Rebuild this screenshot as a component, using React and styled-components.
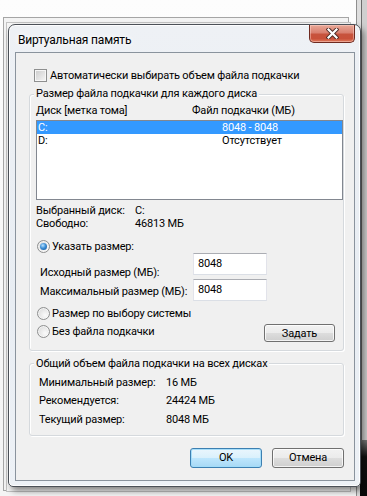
import React from "react";
import styled, { createGlobalStyle } from "styled-components";

const Global = createGlobalStyle`
  html, body { margin: 0; padding: 0; background: #fff; }
  body {
    font-family: "Segoe UI", Roboto, "Noto Sans", sans-serif;
    font-size: 11px;
    letter-spacing: -0.17px;
    color: #000;
  }
  * { white-space: nowrap; }
`;

const Desktop = styled.div`
  position: relative;
  width: 367px;
  height: 496px;
  overflow: hidden;
  background: linear-gradient(#fdfdfd, #f4f4f4);
`;

const BackWindow = styled.div`
  position: absolute;
  left: 3px;
  top: 17px;
  width: 346px;
  height: 474px;
  box-sizing: border-box;
  border: 1px solid #a5a5a5;
  background: #f3f3f3;
`;

const BackPanel = styled.div`
  position: absolute;
  left: 6px;
  top: 22px;
  width: 345px;
  height: 470px;
  box-sizing: border-box;
  border: 1px solid #c3c3c3;
  background: #f6f6f6;
`;

const RightStrip = styled.div`
  position: absolute;
  left: 356px;
  top: 0;
  width: 11px;
  height: 496px;
  box-sizing: border-box;
  border-left: 1px solid #8f8f8f;
  background: linear-gradient(90deg, #dedede 0 4px, #6b6b6b 4px 5px, #cfcfcf 5px);
`;

const RightShade = styled.div`
  position: absolute;
  left: 360px;
  top: 440px;
  width: 7px;
  height: 56px;
  background: linear-gradient(#7a7a7a, #111 30%, #0a0a0a);
`;

const Dialog = styled.div`
  position: absolute;
  left: 8px;
  top: 24px;
  width: 353px;
  height: 463px;
  box-sizing: border-box;
  display: flex;
  flex-direction: column;
  border: 1px solid #4b5057;
  border-radius: 7px 7px 5px 5px;
  background: linear-gradient(#eef1f5, #e8edf3 60%, #edf1f6);
  box-shadow: inset 0 0 0 1px rgba(255, 255, 255, 0.85),
    3px 4px 6px rgba(0, 0, 0, 0.45);
`;

const TitleBar = styled.div`
  flex: none;
  display: flex;
  justify-content: space-between;
  align-items: flex-start;
  height: 27px;
  padding: 0 5px 0 9px;
`;

const Title = styled.div`
  margin-top: 8px;
  line-height: 15px;
  font-size: 12px;
  text-shadow: 0 0 6px #fff, 0 0 10px #fff;
`;

const CloseButton = styled.div`
  width: 46px;
  height: 18px;
  box-sizing: border-box;
  display: flex;
  align-items: center;
  justify-content: center;
  border: 1px solid #6e2a20;
  border-top: none;
  border-radius: 0 0 5px 5px;
  background: linear-gradient(#e9a897 0%, #d98070 45%, #c7533d 55%, #c9513a 80%, #e07c5e 100%);
  box-shadow: inset 0 0 0 1px rgba(255, 220, 210, 0.45);
`;

const Client = styled.div`
  flex: 1;
  min-height: 0;
  margin: 0 5px 5px 6px;
  border: 1px solid #8a939d;
  background: #f0f0f0;
  padding: 15px 10px 0 13px;
  display: flex;
  flex-direction: column;
`;

const CheckRow = styled.label`
  flex: none;
  display: flex;
  align-items: center;
  gap: 3px;
  height: 15px;
  margin-left: 5px;
`;

const CheckBox = styled.span`
  width: 13px;
  height: 13px;
  box-sizing: border-box;
  flex: none;
  border: 1px solid #8e8f8f;
  background: linear-gradient(135deg, #cbcbcb, #f6f6f6);
  box-shadow: inset 0 0 0 1px #f6f6f6;
`;

const Group = styled.section`
  flex: none;
  margin-top: ${(p) => p.$mt}px;
  padding: ${(p) => p.$pad};
  border: 1px solid #d5d9dd;
  border-radius: 3px;
  box-shadow: inset 1px 1px 0 #fff, 1px 1px 0 #fff;
`;

const GroupTitle = styled.div`
  width: fit-content;
  margin: ${(p) => p.$mt}px 0 0 ${(p) => p.$ml}px;
  padding: 0 2px;
  line-height: 15px;
  background: #f0f0f0;
`;

const HeaderRow = styled.div`
  display: grid;
  grid-template-columns: 156px 1fr;
  margin-top: 2px;
  line-height: 15px;
`;

const ListBox = styled.div`
  margin-top: 2px;
  height: 80px;
  box-sizing: border-box;
  border: 1px solid #828790;
  background: #fff;
`;

const ListRow = styled.div`
  display: grid;
  grid-template-columns: 184px 1fr;
  height: 13px;
  line-height: 13px;
  padding-left: 1px;
  background: ${(p) => (p.$selected ? "#3399ff" : "transparent")};
  color: ${(p) => (p.$selected ? "#fff" : "#000")};
`;

const InfoGrid = styled.div`
  margin-top: ${(p) => p.$mt}px;
  display: grid;
  grid-template-columns: ${(p) => p.$col}px 1fr;
  grid-auto-rows: ${(p) => p.$row}px;
  line-height: ${(p) => p.$row}px;
`;

const RadioRow = styled.label`
  display: flex;
  align-items: center;
  gap: 2px;
  height: 13px;
  margin-top: ${(p) => p.$mt || 0}px;
  margin-left: 1px;
  line-height: 13px;
`;

const Radio = styled.span`
  position: relative;
  width: 13px;
  height: 13px;
  box-sizing: border-box;
  flex: none;
  border-radius: 50%;
  border: 1px solid #8e8f8f;
  background: radial-gradient(circle at 65% 65%, #fbfbfb 0%, #e4e4e4 60%, #d2d2d2 100%);
  box-shadow: inset 0 0 0 1px rgba(255, 255, 255, 0.6);

  &::after {
    content: "";
    display: ${(p) => (p.$checked ? "block" : "none")};
    position: absolute;
    left: 2px;
    top: 2px;
    width: 7px;
    height: 7px;
    border-radius: 50%;
    background: radial-gradient(circle at 40% 35%, #b9e2ff 0%, #3d8fd6 45%, #0d4c92 100%);
  }
`;

const FieldRow = styled.div`
  display: grid;
  grid-template-columns: 157px 74px;
  margin-top: ${(p) => p.$mt}px;
`;

const FieldLabel = styled.div`
  height: 22px;
  box-sizing: border-box;
  padding: ${(p) => p.$drop}px 0 0 4px;
  line-height: 15px;
`;

const TextBox = styled.div`
  height: 22px;
  box-sizing: border-box;
  border: 1px solid #dbdfe6;
  border-top-color: #abadb3;
  border-left-color: #e2e3ea;
  border-right-color: #e2e3ea;
  background: #fff;
  padding-left: 4px;
  line-height: 19px;
`;

const LastRow = styled.div`
  display: flex;
  justify-content: space-between;
  align-items: flex-start;
  margin-top: 4px;
  padding-right: 8px;
`;

const LastRadio = styled(RadioRow)`
  margin-top: 1px;
`;

const Button = styled.div`
  width: ${(p) => p.$w}px;
  height: ${(p) => p.$h}px;
  box-sizing: border-box;
  display: flex;
  align-items: center;
  justify-content: center;
  border: 1px solid ${(p) => (p.$default ? "#3c7fb1" : "#707070")};
  border-radius: 3px;
  background: ${(p) =>
    p.$default
      ? "linear-gradient(#eaf6fd 0%, #d9f0fc 50%, #bee6fd 50%, #a7d9f5 100%)"
      : "linear-gradient(#f2f2f2 0%, #ebebeb 50%, #dddddd 50%, #cfcfcf 100%)"};
  box-shadow: inset 0 0 0 1px
    ${(p) => (p.$default ? "rgba(160, 220, 250, 0.9)" : "rgba(255, 255, 255, 0.75)")};
  line-height: 15px;
`;

const ButtonBar = styled.div`
  flex: none;
  display: flex;
  justify-content: flex-end;
  gap: 10px;
  margin-top: 12px;
`;

export default function App() {
  return (
    <>
      <Global />
      <Desktop>
        <BackWindow />
        <BackPanel />
        <RightStrip />
        <RightShade />
        <Dialog>
          <TitleBar>
            <Title>Виртуальная память</Title>
            <CloseButton>
              <svg width="13" height="11" viewBox="0 0 13 11">
                <path d="M2.5 1.5 L10.5 9.5 M10.5 1.5 L2.5 9.5" stroke="#4a2a24" strokeWidth="4" strokeLinecap="square" fill="none" />
                <path d="M2.5 1.5 L10.5 9.5 M10.5 1.5 L2.5 9.5" stroke="#fff" strokeWidth="2.2" strokeLinecap="square" fill="none" />
              </svg>
            </CloseButton>
          </TitleBar>
          <Client>
            <CheckRow>
              <CheckBox />
              <span>Автоматически выбирать объем файла подкачки</span>
            </CheckRow>

            <Group $mt={11} $pad="0 0 8px 6px">
              <GroupTitle $mt={-9} $ml={-2}>Размер файла подкачки для каждого диска</GroupTitle>
              <HeaderRow>
                <span>Диск [метка тома]</span>
                <span>Файл подкачки (МБ)</span>
              </HeaderRow>
              <ListBox>
                <ListRow $selected>
                  <span>C:</span>
                  <span>8048 - 8048</span>
                </ListRow>
                <ListRow>
                  <span>D:</span>
                  <span>Отсутствует</span>
                </ListRow>
              </ListBox>
              <InfoGrid $mt={4} $col={99} $row={13}>
                <span>Выбранный диск:</span>
                <span>C:</span>
                <span>Свободно:</span>
                <span>46813 МБ</span>
              </InfoGrid>
              <RadioRow $mt={10}>
                <Radio $checked />
                <span>Указать размер:</span>
              </RadioRow>
              <FieldRow $mt={0}>
                <FieldLabel $drop={12}>Исходный размер (МБ):</FieldLabel>
                <TextBox>8048</TextBox>
              </FieldRow>
              <FieldRow $mt={4}>
                <FieldLabel $drop={5}>Максимальный размер (МБ):</FieldLabel>
                <TextBox>8048</TextBox>
              </FieldRow>
              <RadioRow $mt={6}>
                <Radio />
                <span>Размер по выбору системы</span>
              </RadioRow>
              <LastRow>
                <LastRadio>
                  <Radio />
                  <span>Без файла подкачки</span>
                </LastRadio>
                <Button $w={71} $h={18}>Задать</Button>
              </LastRow>
            </Group>

            <Group $mt={12} $pad="0 0 6px 9px">
              <GroupTitle $mt={-8} $ml={-5}>Общий объем файла подкачки на всех дисках</GroupTitle>
              <InfoGrid $mt={3} $col={127} $row={18.3}>
                <span>Минимальный размер:</span>
                <span>16 МБ</span>
                <span>Рекомендуется:</span>
                <span>24424 МБ</span>
                <span>Текущий размер:</span>
                <span>8048 МБ</span>
              </InfoGrid>
            </Group>

            <ButtonBar>
              <Button $w={72} $h={20} $default>OK</Button>
              <Button $w={72} $h={20}>Отмена</Button>
            </ButtonBar>
          </Client>
        </Dialog>
      </Desktop>
    </>
  );
}
